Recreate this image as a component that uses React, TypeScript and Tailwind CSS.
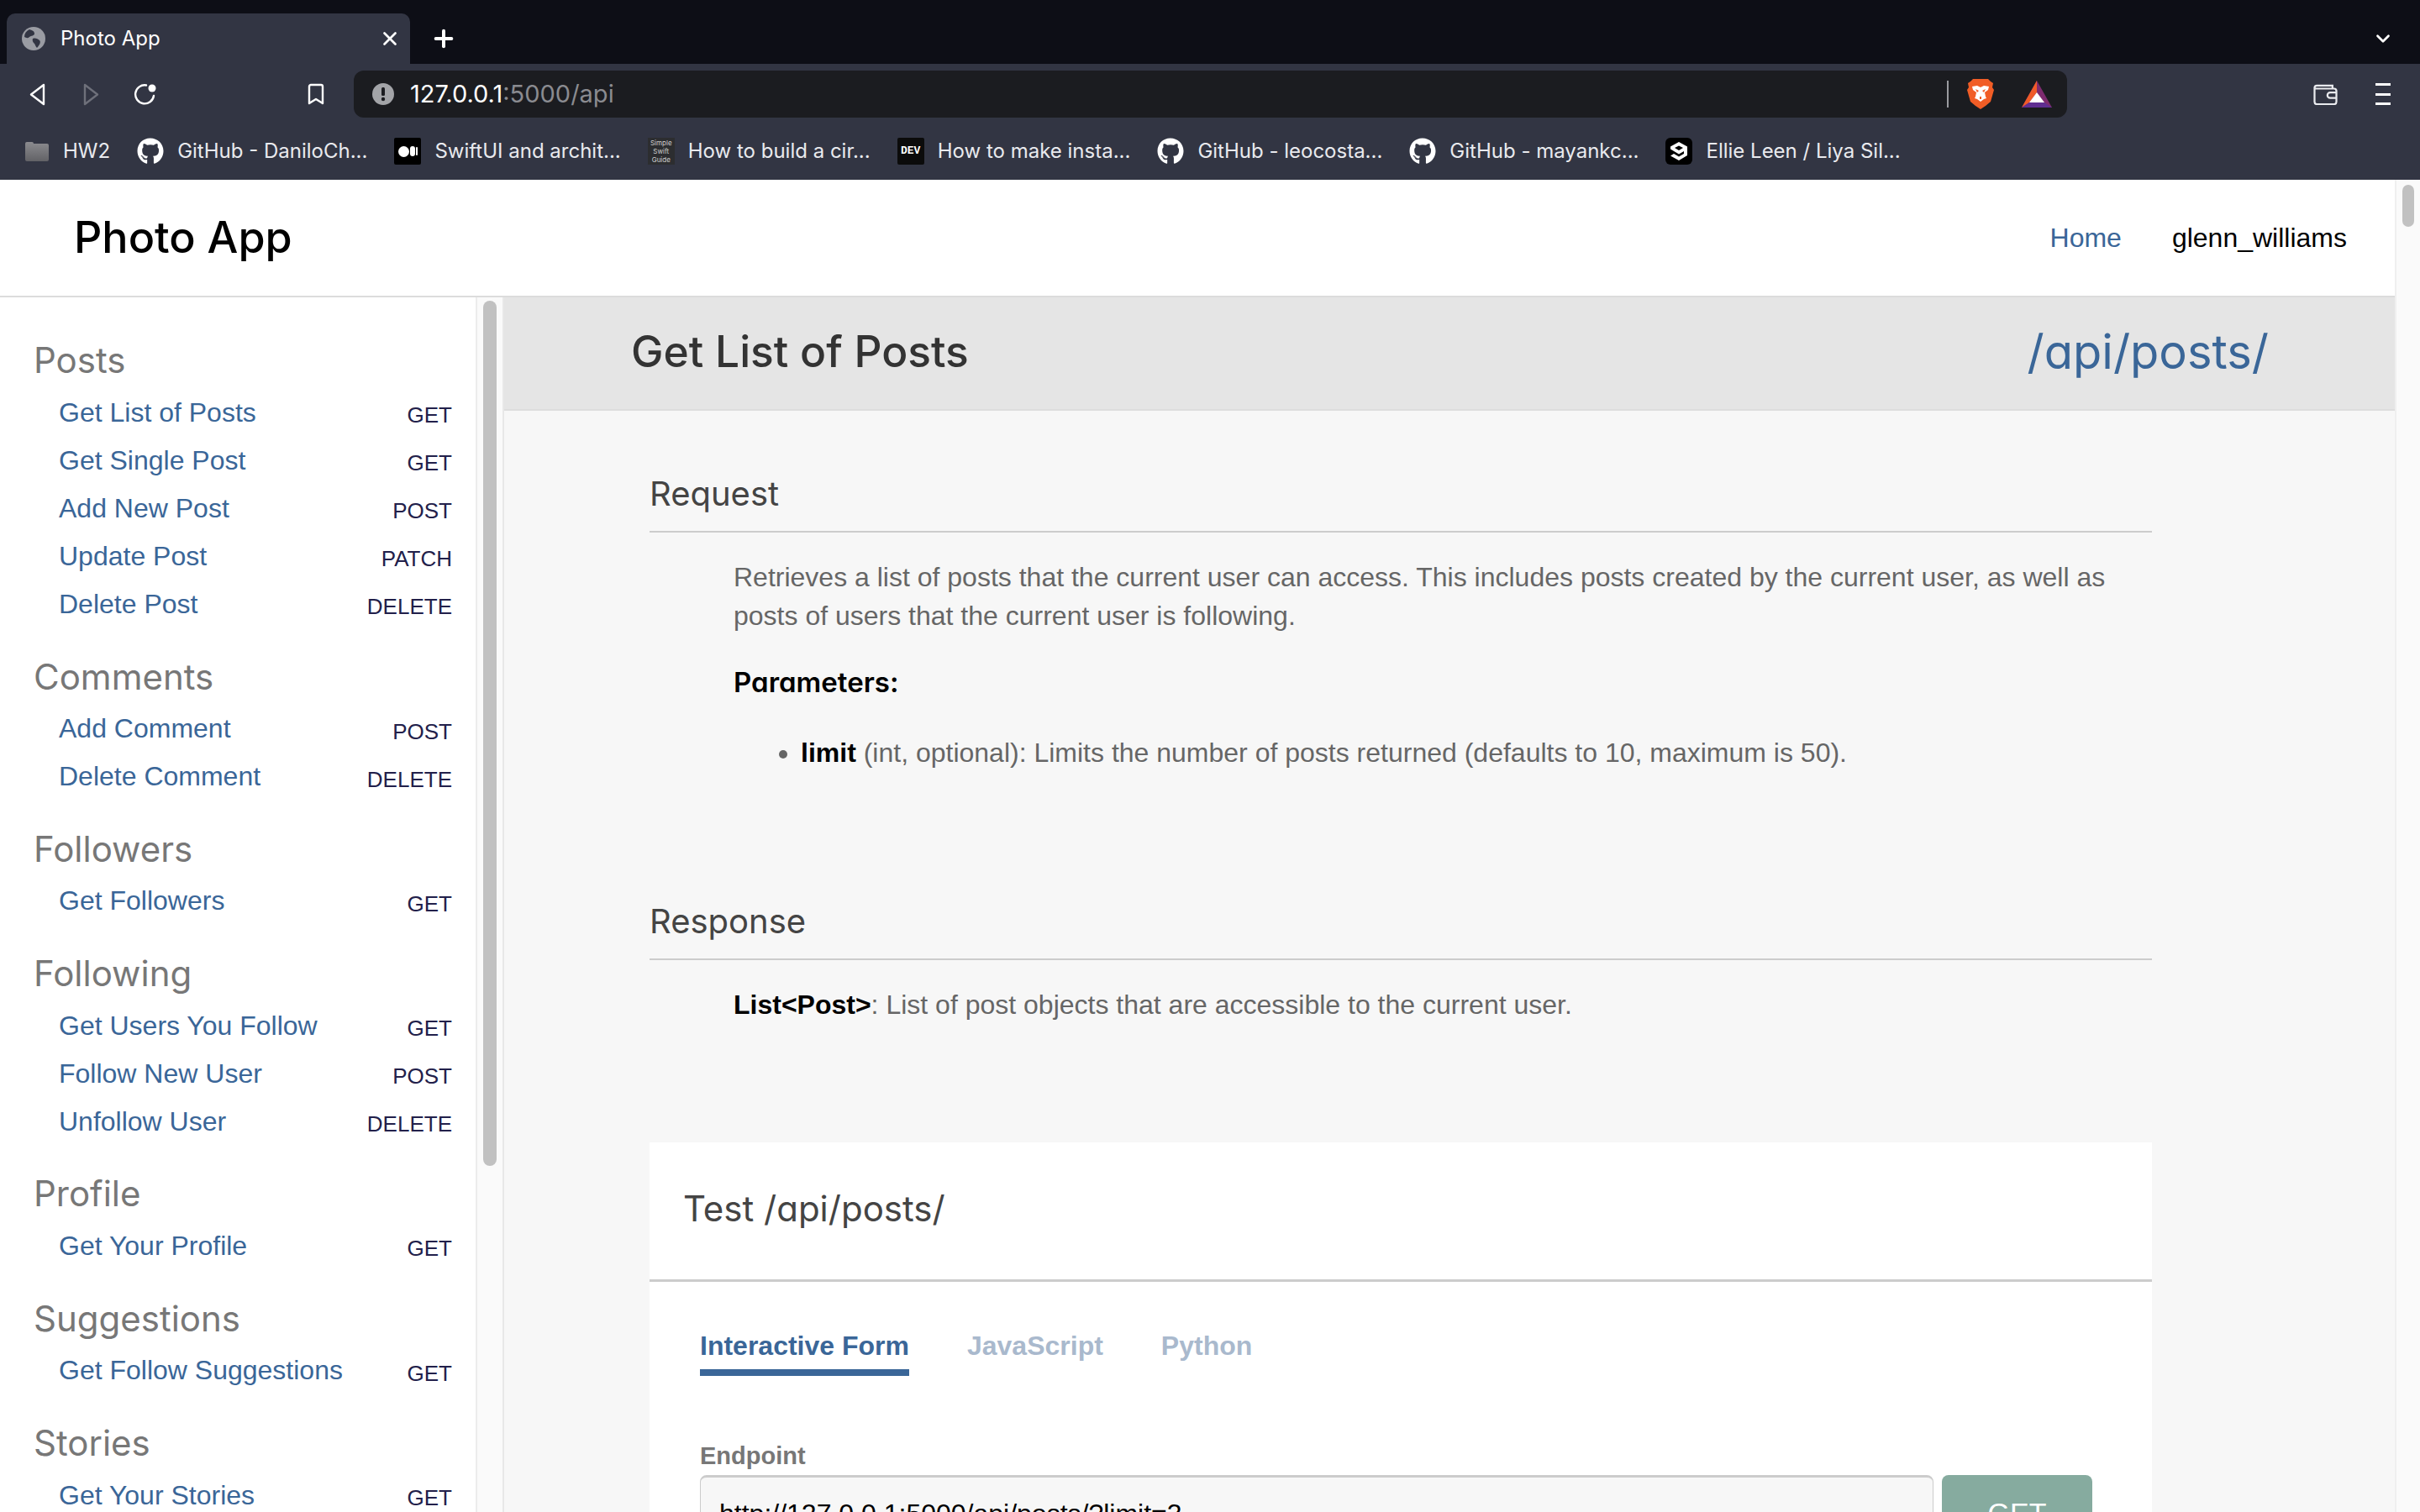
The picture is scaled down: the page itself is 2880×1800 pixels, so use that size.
import { FaGithub } from "react-icons/fa";
import { X, Plus, ChevronDown } from "lucide-react";

const heading = "font-['Inter','Noto_Sans',sans-serif] [font-feature-settings:'cv11']";
const body = "font-['Liberation_Sans',Arial,sans-serif]";

const sections = [
  { title: "Posts", links: [["Get List of Posts", "GET"], ["Get Single Post", "GET"], ["Add New Post", "POST"], ["Update Post", "PATCH"], ["Delete Post", "DELETE"]] },
  { title: "Comments", links: [["Add Comment", "POST"], ["Delete Comment", "DELETE"]] },
  { title: "Followers", links: [["Get Followers", "GET"]] },
  { title: "Following", links: [["Get Users You Follow", "GET"], ["Follow New User", "POST"], ["Unfollow User", "DELETE"]] },
  { title: "Profile", links: [["Get Your Profile", "GET"]] },
  { title: "Suggestions", links: [["Get Follow Suggestions", "GET"]] },
  { title: "Stories", links: [["Get Your Stories", "GET"]] },
];

function Globe() {
  return (
    <svg viewBox="0 0 28 28" className="size-[28px] shrink-0">
      <circle cx="14" cy="14" r="14" fill="#9a9ca3" />
      <path d="M9 3c3 1 6 2 6 5s-4 2-6 4-4 1-6 0c0-4 2-7 6-9zM13 14c3-1 6 0 8 2s0 6-3 9c-2-2-2-4-3-5s-3-3-2-6z" fill="#323543" />
    </svg>
  );
}

function Bolt() {
  return (
    <svg viewBox="0 0 26 26" className="size-[26px] shrink-0">
      <circle cx="13" cy="13" r="13" fill="#a3a4a8" />
      <rect x="11" y="5" width="4" height="10" rx="1.5" fill="#1b1c20" />
      <circle cx="13" cy="19" r="2.2" fill="#1b1c20" />
    </svg>
  );
}

function BraveLion() {
  return (
    <svg viewBox="0 0 32 36" className="h-[36px] w-[32px]">
      <path d="M7 0h18l3 3 3 2-1 5 2 3-4 14-6 5-6 4-6-4-6-5L0 13l2-3-1-5 3-2z" fill="#f15d26" />
      <path d="M6 9l6-1 4 2 4-2 6 1-1 4-4 3 1 5 1 2-3 1-4 3-4-3-3-1 1-2 1-5-4-3z" fill="#fff" />
      <path d="M10 12l4 2-2 2zM22 12l-4 2 2 2zM15 21h2v3h-2z" fill="#f15d26" />
    </svg>
  );
}

function BatTriangle() {
  return (
    <svg viewBox="0 0 36 32" className="h-[32px] w-[36px]">
      <path d="M18 0L0 32h36z" fill="#7d2b6f" />
      <path d="M18 0L0 32l9-6 9-12z" fill="#ef5a28" />
      <path d="M0 32h36l-9-6H9z" fill="#5f2e91" />
      <path d="M18 14l9 12H9z" fill="#fff" />
    </svg>
  );
}

function Bookmark_({ icon, label }: { icon: React.ReactNode; label: string }) {
  return (
    <div className="flex items-center gap-[16px]">
      {icon}
      <span className="text-[24px] leading-none text-[#e9eaee] whitespace-nowrap">{label}</span>
    </div>
  );
}

function BrowserChrome() {
  return (
    <div className="shrink-0 font-['Inter',sans-serif] text-white">
      <div className="flex h-[76px] items-end bg-[#0d0e16] pl-[8px]">
        <div className="flex h-[60px] w-[480px] items-center rounded-t-[10px] bg-[#323543] pl-[18px] pr-[11px]">
          <Globe />
          <span className="ml-[18px] flex-1 text-[24px]">Photo App</span>
          <X size={26} strokeWidth={2.5} />
        </div>
        <div className="flex h-[60px] items-center pl-[24px]">
          <Plus size={32} strokeWidth={3} />
        </div>
        <div className="ml-auto flex h-[60px] items-center pr-[31px]">
          <ChevronDown size={26} strokeWidth={2.5} />
        </div>
      </div>
      <div className="bg-[#323543]">
        <div className="flex h-[64px] items-end">
          <div className="flex h-[56px] w-[421px] items-center pl-[35px]">
            <svg viewBox="0 0 19 27" className="h-[27px] w-[19px]" fill="none" strokeWidth="2.4" strokeLinejoin="round">
              <path d="M17 2L2 13.5 17 25z" stroke="#fff" />
            </svg>
            <svg viewBox="0 0 19 27" className="ml-[45px] h-[27px] w-[19px]" fill="none" strokeWidth="2.4" strokeLinejoin="round">
              <path d="M2 2l15 11.5L2 25z" stroke="#6e707a" />
            </svg>
            <svg viewBox="0 0 27 26" className="ml-[41px] h-[26px] w-[27px]">
              <path d="M15 2.5A11 11 0 1 0 24 15" fill="none" stroke="#fff" strokeWidth="2.4" strokeLinecap="round" />
              <circle cx="22" cy="6" r="4.5" fill="#fff" />
            </svg>
            <svg viewBox="0 0 20 26" className="ml-[180px] h-[26px] w-[20px]" fill="none" strokeWidth="2.4" strokeLinejoin="round">
              <path d="M2 4a2 2 0 012-2h12a2 2 0 012 2v20l-8-5-8 5z" stroke="#fff" />
            </svg>
          </div>
          <div className="flex h-[56px] w-[2039px] items-center rounded-[12px] bg-[#1b1c20] pl-[22px] pr-[18px]">
            <Bolt />
            <span className="ml-[19px] flex-1 text-[29px]">
              127.0.0.1<span className="text-[#8a8b90]">:5000/api</span>
            </span>
            <div className="h-[32px] w-[2px] bg-[#9a9ba0]" />
            <div className="ml-[22px]"><BraveLion /></div>
            <div className="ml-[33px]"><BatTriangle /></div>
          </div>
          <div className="flex h-[56px] flex-1 items-center justify-end gap-[44px] pr-[35px]">
            <svg viewBox="0 0 32 28" className="h-[26px] w-[31px]" fill="none" stroke="#e9eaee" strokeWidth="2.4">
              <path d="M2 6a3 3 0 013-3h20v4M2 6v18a3 3 0 003 3h22a3 3 0 003-3V10a3 3 0 00-3-3H2" />
              <path d="M30 12h-8a3.5 3.5 0 000 7h8" />
            </svg>
            <div className="flex h-[26px] w-[18px] flex-col justify-between">
              <div className="h-[3px] bg-white" />
              <div className="h-[3px] bg-white" />
              <div className="h-[3px] bg-white" />
            </div>
          </div>
        </div>
        <div className="flex h-[74px] items-center gap-[32px] pl-[29px] pt-[6px]">
          <Bookmark_
            label="HW2"
            icon={
              <svg viewBox="0 0 30 26" className="h-[26px] w-[30px]">
                <defs>
                  <linearGradient id="folder" x1="0" y1="0" x2="0" y2="1">
                    <stop offset="0" stopColor="#8b8b8f" />
                    <stop offset="1" stopColor="#626266" />
                  </linearGradient>
                </defs>
                <path d="M1 4a2 2 0 012-2h6a2 2 0 012 2h16a2 2 0 012 2v17a2 2 0 01-2 2H3a2 2 0 01-2-2z" fill="url(#folder)" />
              </svg>
            }
          />
          <Bookmark_ label="GitHub - DaniloCh..." icon={<FaGithub size={32} />} />
          <Bookmark_
            label="SwiftUI and archit..."
            icon={
              <div className="flex size-[32px] items-center justify-center gap-[1px] rounded-[2px] bg-black">
                <div className="size-[13px] rounded-full bg-white" />
                <div className="h-[12px] w-[6px] rounded-full bg-white" />
                <div className="h-[10px] w-[2px] rounded-full bg-white" />
              </div>
            }
          />
          <Bookmark_
            label="How to build a cir..."
            icon={
              <div className="flex size-[32px] flex-col items-center justify-center bg-[#2c2d30] text-[8px] leading-[10px] text-[#cfcfcf]">
                <span>Simple</span>
                <span>Swift</span>
                <span>Guide</span>
              </div>
            }
          />
          <Bookmark_
            label="How to make insta..."
            icon={
              <div className="flex size-[32px] items-center justify-center rounded-[2px] bg-[#0b0b0b] font-['Liberation_Mono',monospace] text-[13px] font-bold text-white">
                DEV
              </div>
            }
          />
          <Bookmark_ label="GitHub - leocosta..." icon={<FaGithub size={32} />} />
          <Bookmark_ label="GitHub - mayankc..." icon={<FaGithub size={32} />} />
          <Bookmark_
            label="Ellie Leen / Liya Sil..."
            icon={
              <div className="flex size-[32px] items-center justify-center rounded-[6px] bg-black">
                <svg viewBox="0 0 20 22" className="h-[22px] w-[20px]">
                  <path
                    fillRule="evenodd"
                    d="M10 0l10 5.5V16l-10 6-10-5.5L4 14l6 3.5 6-3.5v-3l-6 3.5-10-6v-3zM10 4.5L5 7l5 3 5-3z"
                    fill="#fff"
                  />
                </svg>
              </div>
            }
          />
        </div>
      </div>
    </div>
  );
}

function Sidebar() {
  return (
    <div className="flex w-[600px] shrink-0 border-r-2 border-[#e8e8e8] bg-white">
      <div className={`w-[568px] overflow-hidden border-r-2 border-[#ececec] pl-[40px] pr-[28px] pt-[17px] ${body}`}>
        {sections.map((s) => (
          <div key={s.title}>
            <h3 className={`flex h-[91.3px] items-end pb-[5px] text-[42px] leading-[56px] text-[#777] ${heading}`}>
              {s.title}
            </h3>
            {s.links.map(([name, method]) => (
              <div key={name} className="flex h-[57px] items-center justify-between pl-[30px]">
                <span className="text-[32px] text-[#3a6698]">{name}</span>
                <span className="pt-[8px] text-[26px] text-[#22204a]">{method}</span>
              </div>
            ))}
          </div>
        ))}
      </div>
      <div className="flex-1 bg-[#fafafa] px-[7px] pt-[4px]">
        <div className="h-[1030px] rounded-full bg-[#c1c1c1]" />
      </div>
    </div>
  );
}

function SectionHeading({ title, top }: { title: string; top: string }) {
  return (
    <h2 className={`flex h-[90px] items-center border-b-2 border-[#ccc] text-[40px] text-[#444] ${top} ${heading}`}>
      {title}
    </h2>
  );
}

function Main() {
  return (
    <div className={`flex-1 overflow-hidden bg-[#f7f7f7] ${body}`}>
      <div className="flex h-[135px] items-center justify-between border-b-2 border-[#ddd] bg-[#e5e5e5] pb-[4px] pl-[151px] pr-[150px]">
        <h1 className={`text-[51.5px] font-medium text-[#333] ${heading}`}>Get List of Posts</h1>
        <span className={`text-[56px] text-[#3a6698] ${heading}`}>/api/posts/</span>
      </div>
      <div className="ml-[173px] w-[1788px]">
        <SectionHeading title="Request" top="mt-[55px]" />
        <p className="mt-[30px] pl-[100px] text-[32px] leading-[46px] text-[#666]">
          Retrieves a list of posts that the current user can access. This includes posts created by the current user, as well as posts of users that the current user is following.
        </p>
        <h4 className={`mt-[33px] pl-[100px] text-[33px] font-semibold leading-[46px] text-black ${heading}`}>
          Parameters:
        </h4>
        <ul className="mt-[38px] list-disc pl-[180px] text-[32px] leading-[46px] text-[#666] marker:text-[#666]">
          <li>
            <strong className="font-bold text-black">limit</strong> (int, optional): Limits the number of posts returned (defaults to 10, maximum is 50).
          </li>
        </ul>
        <SectionHeading title="Response" top="mt-[134px]" />
        <p className="mt-[30px] pl-[100px] text-[32px] leading-[46px] text-[#666]">
          <strong className="font-bold text-black">List&lt;Post&gt;</strong>: List of post objects that are accessible to the current user.
        </p>
        <div className="mt-[141px] h-[600px] bg-white">
          <div className={`flex h-[166px] items-center border-b-[3px] border-[#ccc] pb-[6px] pl-[40px] text-[42px] text-[#444] ${heading}`}>
            Test /api/posts/
          </div>
          <div className="px-[60px]">
            <div className="mt-[52px] flex gap-[69px] text-[32px] font-bold">
              <div className="h-[60px] border-b-[8px] border-[#3a6698] text-[#3a6698]">Interactive Form</div>
              <div className="text-[#a9b9cd]">JavaScript</div>
              <div className="text-[#a9b9cd]">Python</div>
            </div>
            <div className="mt-[78px] text-[29px] font-bold leading-[34px] text-[#777]">Endpoint</div>
            <div className="mt-[6px] flex gap-[10px]">
              <div className="flex h-[90px] w-[1468px] items-center rounded-[8px] border border-t-[3px] border-[#ccc] bg-[#f7f7f7] pl-[22px] text-[32px] text-black">
                http://127.0.0.1:5000/api/posts/?limit=3
              </div>
              <div className="flex h-[90px] w-[179px] items-center justify-center rounded-[8px] bg-[#86ab9f] text-[34px] text-white">
                GET
              </div>
            </div>
          </div>
        </div>
      </div>
    </div>
  );
}

export default function App() {
  return (
    <div className="flex h-screen w-full flex-col overflow-hidden bg-white">
      <BrowserChrome />
      <div className="flex min-h-0 flex-1">
        <div className="flex min-w-0 flex-1 flex-col">
          <header className={`flex h-[140px] shrink-0 items-center justify-between border-b-2 border-[#dcdcdc] bg-white pl-[88px] pr-[57px] ${body}`}>
            <span className={`text-[52px] font-medium text-black ${heading}`}>Photo App</span>
            <nav className="flex items-center gap-[60px] text-[32px]">
              <span className="text-[#3a6698]">Home</span>
              <span className="text-black">glenn_williams</span>
            </nav>
          </header>
          <div className="flex min-h-0 flex-1">
            <Sidebar />
            <Main />
          </div>
        </div>
        <div className="w-[30px] shrink-0 border-l-2 border-[#efefef] bg-[#fafafa] px-[7px] pt-[6px]">
          <div className="h-[50px] rounded-full bg-[#c1c1c1]" />
        </div>
      </div>
    </div>
  );
}
